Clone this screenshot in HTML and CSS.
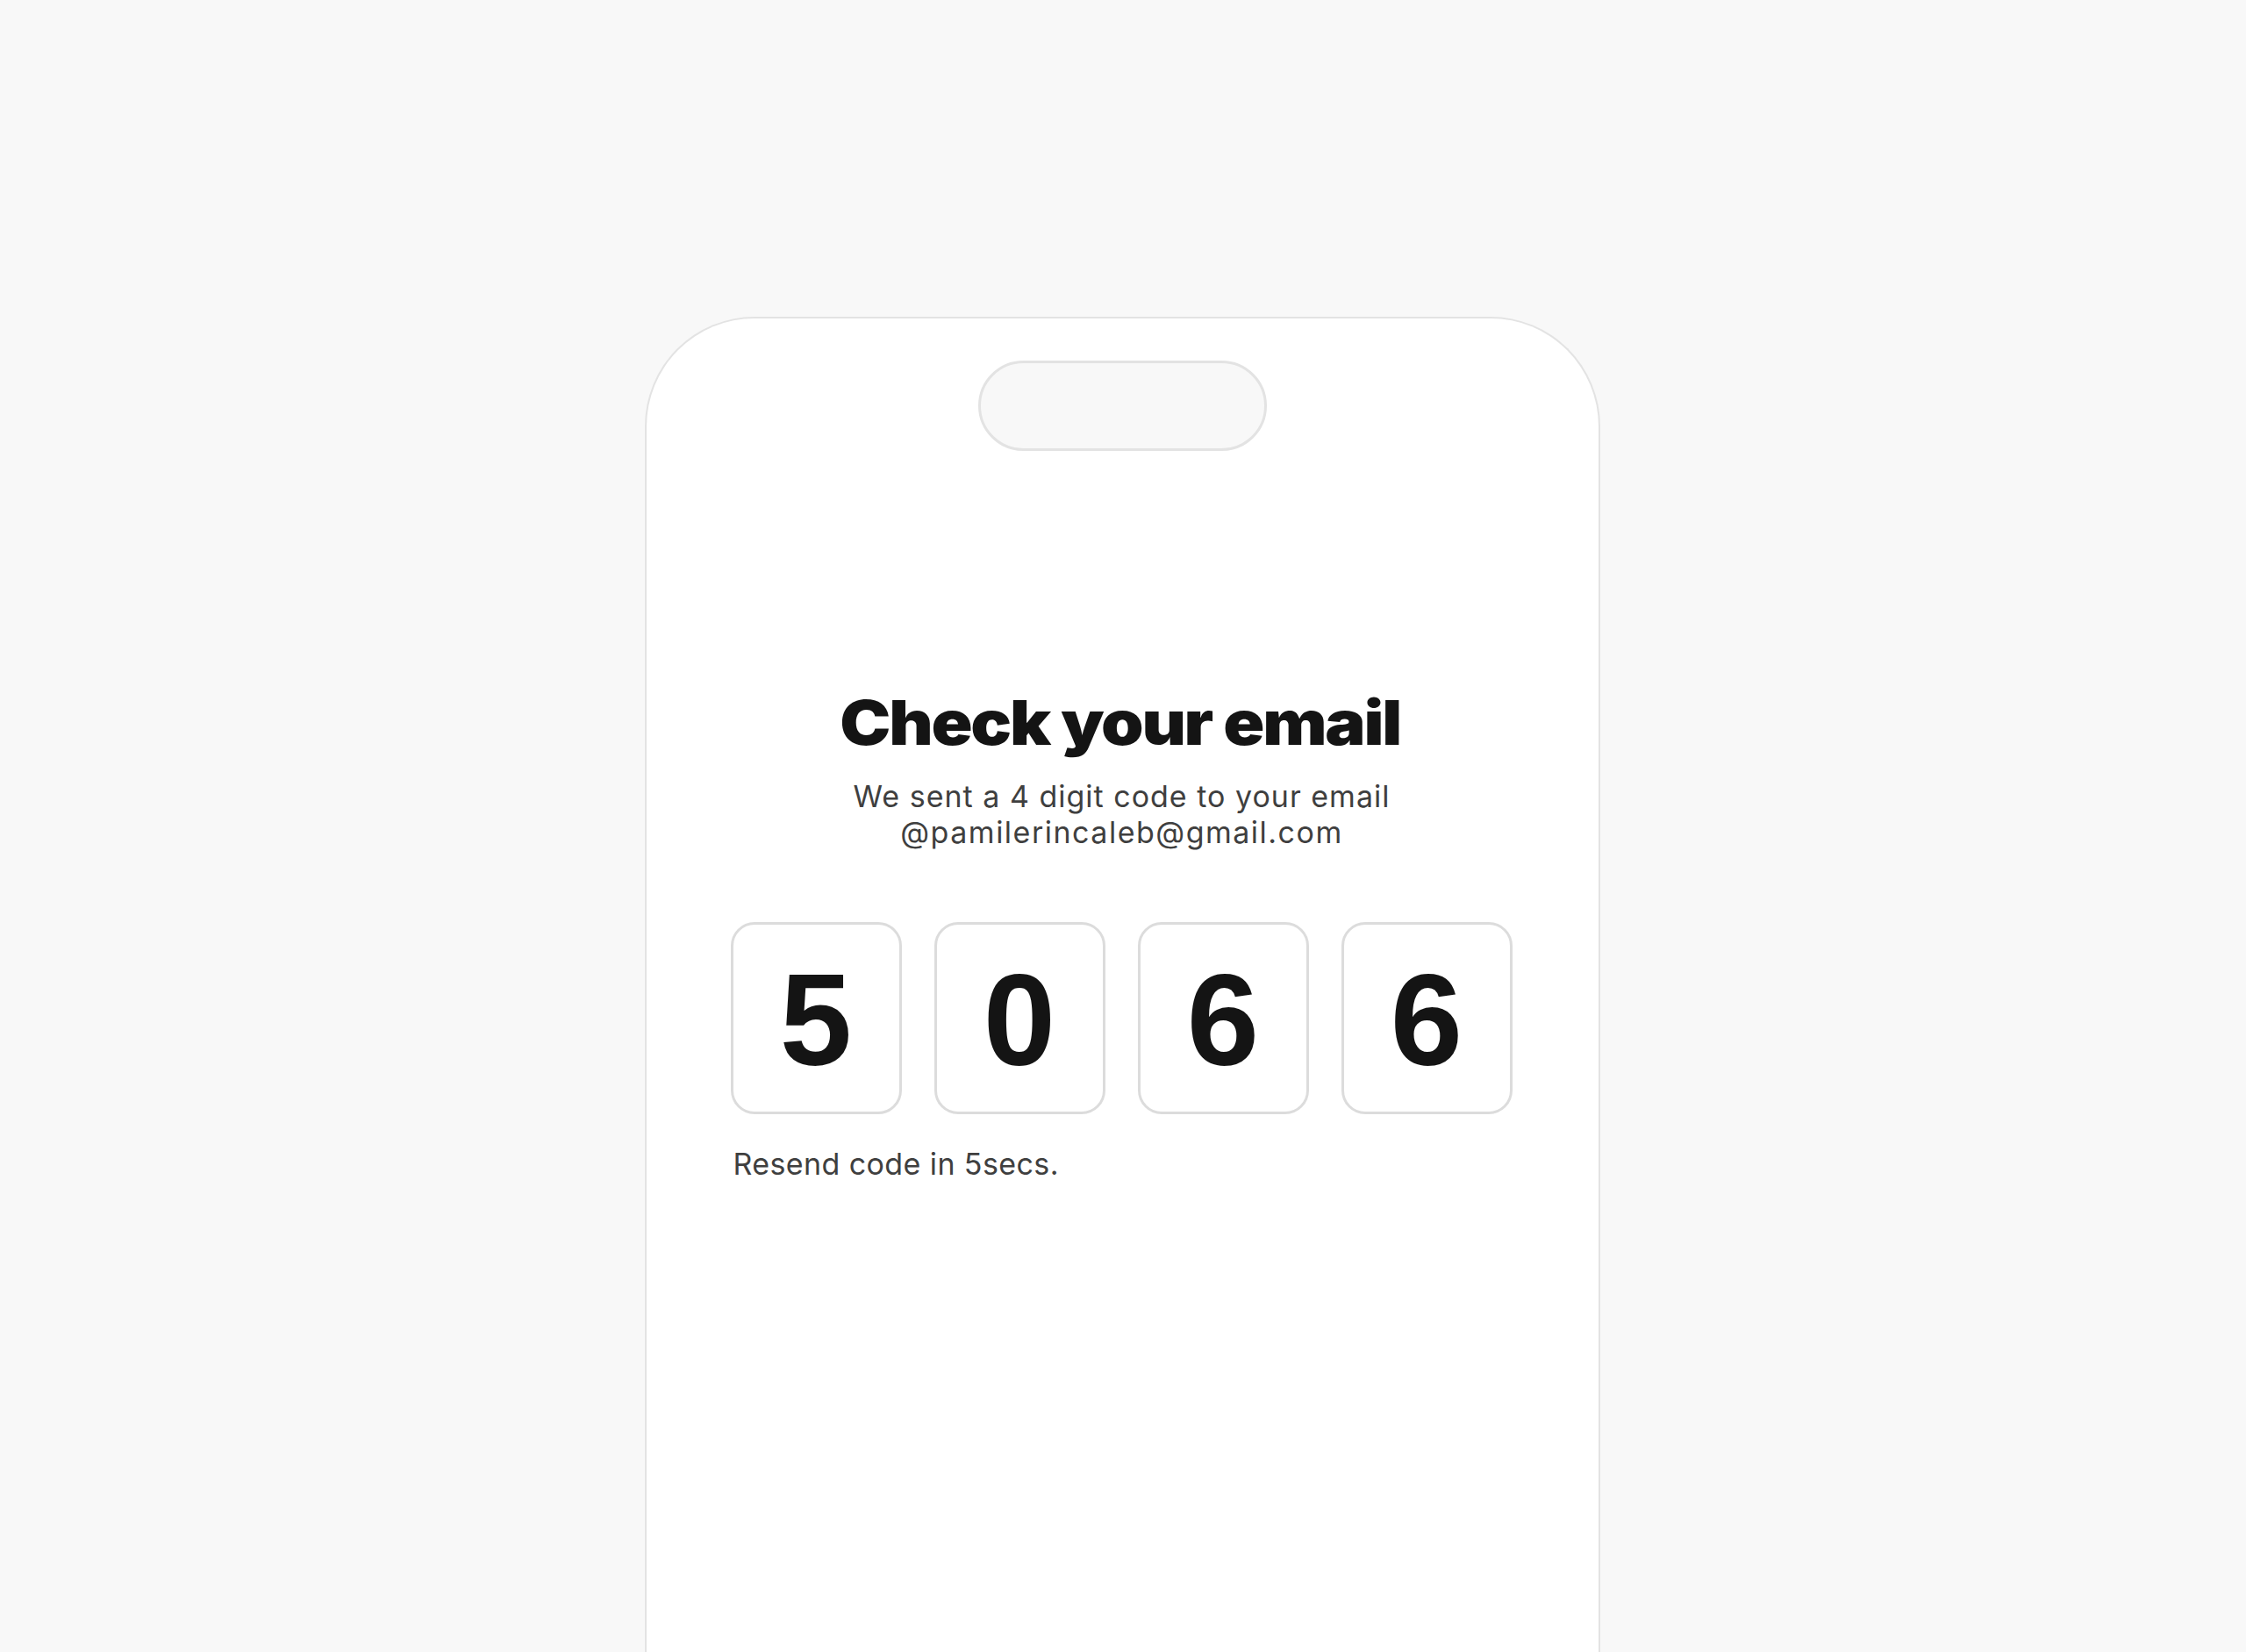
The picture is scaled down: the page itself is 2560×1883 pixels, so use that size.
FILE: index.html
```html
<!DOCTYPE html>
<html lang="en">
<head>
<meta charset="utf-8">
<title>Check your email</title>
<link rel="stylesheet" href="styles.css">
</head>
<body>
<main class="stage">
  <section class="phone">
    <div class="island"></div>
    <div class="content">
      <h1 class="title">Check your email</h1>
      <p class="subtitle">We sent a 4 digit code to your email<br><span class="email">@pamilerincaleb@gmail.com</span></p>
      <div class="code">
        <div class="digit">5</div>
        <div class="digit">0</div>
        <div class="digit">6</div>
        <div class="digit">6</div>
      </div>
      <p class="resend">Resend code in 5secs.</p>
    </div>
  </section>
</main>
</body>
</html>
```
FILE: styles.css
```css
* { box-sizing: border-box; }
html, body { margin: 0; padding: 0; background: #f8f8f8; }
.stage {
  height: 1883px;
  overflow: hidden;
  display: flex;
  justify-content: center;
  padding-top: 361px;
}
.phone {
  width: 1089px;
  height: 1522px;
  margin-left: -1px;
  background: #fff;
  border: 2px solid #e3e3e3;
  border-bottom: 0;
  border-radius: 125px 125px 0 0;
  display: flex;
  flex-direction: column;
  align-items: center;
}
.island {
  width: 329px;
  height: 103px;
  margin-top: 48px;
  background: #f8f8f8;
  border: 3px solid #e3e3e3;
  border-radius: 52px;
  flex: none;
}
.content {
  width: 890px;
  margin-left: -2px;
  display: flex;
  flex-direction: column;
  align-items: center;
  font-family: "Inter", "Liberation Sans", sans-serif;
}
.title {
  margin: 265px 0 0;
  font-size: 70px;
  line-height: 90px;
  font-weight: 900;
  letter-spacing: -2px;
  color: #141414;
  white-space: nowrap;
  transform: translateX(-2px) scaleX(1.11);
}
.subtitle {
  margin: 18px 0 0;
  font-size: 34px;
  line-height: 41px;
  font-weight: 400;
  letter-spacing: 1px;
  color: #3f3f3f;
  text-align: center;
}
.email { letter-spacing: 1.5px; }
.code {
  margin-top: 82px;
  margin-left: -1px;
  display: flex;
  gap: 37px;
  align-self: stretch;
}
.digit {
  width: 195px;
  height: 219px;
  padding-top: 4px;
  border: 3px solid #dcdcdc;
  border-radius: 27px;
  display: flex;
  align-items: center;
  justify-content: center;
  font-family: "Liberation Sans", Arial, sans-serif;
  font-size: 148px;
  line-height: 1;
  font-weight: 700;
  color: #141414;
}
.resend {
  margin: 36px 0 0;
  align-self: flex-start;
  padding-left: 2px;
  font-size: 34px;
  line-height: 41px;
  letter-spacing: 0.4px;
  color: #3f3f3f;
}
```
